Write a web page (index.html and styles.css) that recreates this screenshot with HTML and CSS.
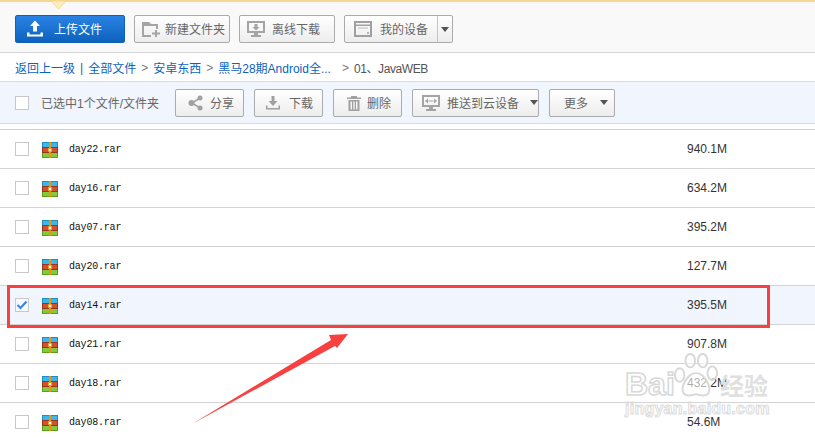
FILE: index.html
```html
<!DOCTYPE html>
<html lang="zh-CN">
<head>
<meta charset="utf-8">
<title>网盘</title>
<link rel="stylesheet" href="styles.css">
</head>
<body>
<div class="page">
  <svg class="notch" width="15" height="9" viewBox="0 0 15 9"><path d="M0 0H15L7.5 8Z" fill="#fcecc4" stroke="#f5d88f"/></svg>
  <header class="toolbar">
    <button class="btn primary">
      <svg class="ic" width="18" height="18" viewBox="0 0 18 18"><path d="M9 1L14 6.500H11V12H7V6.500H4ZM1 13H3.500V15H14.500V13H17V17H1Z" fill="#fff" transform="translate(0 -.5)"/></svg>
      <span class="tb-text">上传文件</span>
    </button>
    <button class="btn w96 folder">
      <svg class="ic" width="20" height="18" viewBox="0 0 20 18"><path d="M1 2H8L10 4H17V9H15V6H3V15H10V17H1Z" fill="#a4a4a4"/><path d="M14 10H16V12.500H19V14.500H16V17H14V14.500H11V12.500H14Z" fill="#a4a4a4"/></svg>
      <span class="tb-text">新建文件夹</span>
    </button>
    <button class="btn w96 offline">
      <svg class="ic" width="20" height="18" viewBox="0 0 20 18"><path d="M1 1H19V13H1ZM3 3V11H17V3Z" fill="#a4a4a4" fill-rule="evenodd"/><path d="M8.500 4H11.500V7H13.500L10 10.500L6.500 7H8.500ZM8 13H12V15H15V17H5V15H8Z" fill="#a4a4a4"/></svg>
      <span class="tb-text">离线下载</span>
    </button>
    <div class="btn split">
      <span class="split-main">
        <svg class="ic" width="18" height="18" viewBox="0 0 18 18"><path d="M0 1H18V17H0ZM2 6V15H16V6ZM2 3V4.500H16V3Z" fill="#a0a0a0" fill-rule="evenodd"/><path d="M4 7.500H14V8.500H4Z" fill="#bbb"/><circle cx="14" cy="13" r="1" fill="#a0a0a0"/></svg>
        <span class="tb-text">我的设备</span>
      </span>
      <span class="split-arrow"><i class="caret"></i></span>
    </div>
  </header>

  <nav class="crumbs">
    <a>返回上一级</a><span class="bar">|</span><a>全部文件</a><span class="sep">&gt;</span><a>安卓东西</a><span class="sep">&gt;</span><a class="trunc">黑马28期Android全...</a><span class="sep last">&gt;</span><span class="cur">01、JavaWEB</span>
  </nav>

  <section class="selbar">
    <span class="box"></span>
    <span class="seltext">已选中1个文件/文件夹</span>
    <div class="actions">
      <button class="btn act w69 share">
        <svg class="ic" width="16" height="16" viewBox="0 0 16 16"><path d="M12 3L4 8L12 13" fill="none" stroke="#a0a0a0" stroke-width="1.500"/><circle cx="12" cy="3" r="2.500" fill="#a0a0a0"/><circle cx="3.500" cy="8" r="3" fill="#a0a0a0"/><circle cx="12" cy="13" r="2.500" fill="#a0a0a0"/></svg>
        <span>分享</span>
      </button>
      <button class="btn act w69 down">
        <svg class="ic" width="16" height="16" viewBox="0 0 16 16"><path d="M6.500 1H9.500V6H12.500L8 11L3.500 6H6.500ZM1 10.500H2.500V13H13.500V10.500H15V14.500H1Z" fill="#a0a0a0"/></svg>
        <span>下载</span>
      </button>
      <button class="btn act w69 del">
        <svg class="ic" width="16" height="16" viewBox="0 0 16 16"><path d="M5 1H11V2.500H15V4H1V2.500H5ZM2.500 5H13.500V16H2.500ZM4.500 6.500V14.500H6V6.500ZM7.300 6.500V14.500H8.700V6.500ZM10 6.500V14.500H11.500V6.500Z" fill="#a0a0a0" fill-rule="evenodd"/></svg>
        <span>删除</span>
      </button>
      <button class="btn act w127 push">
        <svg class="ic" width="20" height="18" viewBox="0 0 20 18"><path d="M1 1H19V13H1ZM3 3V11H17V3Z" fill="#a4a4a4" fill-rule="evenodd"/><path d="M4 7L7 4.500V9.500ZM16 7L13 4.500V9.500ZM7.500 6.400H12.500V7.600H7.500ZM8 13H12V15H15V17H5V15H8Z" fill="#a4a4a4"/></svg>
        <span>推送到云设备</span><i class="caret"></i>
      </button>
      <button class="btn act w66 more">
        <span>更多</span><i class="caret"></i>
      </button>
    </div>
  </section>

  <main class="list">
    <div class="row"><span class="box"></span><svg class="rar" width="16" height="16" viewBox="0 0 16 16"><use href="#rar"/></svg><span class="name">day22.rar</span><span class="size">940.1M</span></div>
    <div class="row"><span class="box"></span><svg class="rar" width="16" height="16" viewBox="0 0 16 16"><use href="#rar"/></svg><span class="name">day16.rar</span><span class="size">634.2M</span></div>
    <div class="row"><span class="box"></span><svg class="rar" width="16" height="16" viewBox="0 0 16 16"><use href="#rar"/></svg><span class="name">day07.rar</span><span class="size">395.2M</span></div>
    <div class="row"><span class="box"></span><svg class="rar" width="16" height="16" viewBox="0 0 16 16"><use href="#rar"/></svg><span class="name">day20.rar</span><span class="size">127.7M</span></div>
    <div class="row selected"><span class="box checked"><svg width="12" height="12" viewBox="0 0 12 12"><path d="M1.500 6L4.500 9L10.500 2.500" fill="none" stroke="#3b86e0" stroke-width="2.200"/></svg></span><svg class="rar" width="16" height="16" viewBox="0 0 16 16"><use href="#rar"/></svg><span class="name">day14.rar</span><span class="size">395.5M</span></div>
    <div class="row"><span class="box"></span><svg class="rar" width="16" height="16" viewBox="0 0 16 16"><use href="#rar"/></svg><span class="name">day21.rar</span><span class="size">907.8M</span></div>
    <div class="row"><span class="box"></span><svg class="rar" width="16" height="16" viewBox="0 0 16 16"><use href="#rar"/></svg><span class="name">day18.rar</span><span class="size">432.2M</span></div>
    <div class="row"><span class="box"></span><svg class="rar" width="16" height="16" viewBox="0 0 16 16"><use href="#rar"/></svg><span class="name">day08.rar</span><span class="size">54.6M</span></div>
  </main>

  <svg class="defs" width="0" height="0">
    <symbol id="rar" viewBox="0 0 16 16">
      <rect width="16" height="16" fill="#1e8fc4"/>
      <rect x="1" y="1" width="14" height="4" fill="#3fb6e8"/>
      <rect y="5" width="16" height="6" fill="#9c3518"/>
      <rect x="1" y="6" width="14" height="4" fill="#d2502e"/>
      <rect y="11" width="16" height="5" fill="#5a9e1e"/>
      <rect x="1" y="11" width="14" height="4" fill="#84c83c"/>
      <rect x="7" width="2" height="16" fill="#e8960e"/>
      <rect x="6" y="6" width="4" height="4" fill="#f0a020"/>
      <rect x="7" y="7" width="2" height="2" fill="#fff"/>
    </symbol>
  </svg>

  <div class="redbox"></div>
  <svg class="arrow" width="170" height="100" viewBox="0 0 170 100"><path d="M2 92L141 8L139 3L158 2L147 16L145 14Z" fill="#f94040"/></svg>

  <div class="mark">
    <div class="mark-top">
      <span class="mark-bai">Bai</span>
      <svg class="paw" width="46" height="46" viewBox="0 0 46 48"><g fill="#fff" fill-opacity=".6" stroke="#d8d8d8" stroke-width="2"><ellipse cx="6" cy="24" rx="5" ry="7"/><ellipse cx="17" cy="9" rx="5" ry="7"/><ellipse cx="30" cy="9" rx="5" ry="7"/><ellipse cx="40" cy="22" rx="5" ry="7"/><path d="M23 22C15 22 9 33 9 39C9 47 18 46 23 44C28 46 37 47 37 39C37 33 31 22 23 22Z"/></g></svg>
      <span class="mark-cn">经验</span>
    </div>
    <div class="mark-url">jingyan.baidu.com</div>
  </div>
</div>
</body>
</html>
```

FILE: styles.css
```css
* { box-sizing: border-box; }
html, body { margin: 0; height: 100%; overflow: hidden; background: #fff; }
body { font: 12px "Liberation Sans", "Noto Sans CJK SC", sans-serif; color: #666; }
.page { position: relative; width: 815px; height: 439px; overflow: hidden; }
.defs { position: absolute; }

.notch { position: absolute; left: 51px; top: 1px; }
.toolbar {
  height: 53px; padding: 13px 15px 0;
  display: flex; gap: 9px; align-items: flex-start;
  background: #f9f9f9;
  border-top: 2px solid #f5d88f;
  border-bottom: 1px solid #d5d5d5;
}

.btn {
  height: 28px; padding: 0;
  display: flex; align-items: center; justify-content: flex-start;
  border: 1px solid #ababab; border-radius: 2px;
  background: linear-gradient(#fff, #ededed);
  font: inherit; color: #666; font-size: 12px;
}
.tb-text { padding-bottom: 2px; }
.btn.primary {
  width: 110px; gap: 10px; padding-left: 10px;
  border-color: #0f62b8; color: #fff;
  background: linear-gradient(#2a82e4, #0c62bc);
}
.w96 { width: 96px; }
.w69 { width: 69px; }
.w127 { width: 127px; }
.w66 { width: 66px; }
.ic { flex: none; }
.folder { padding-left: 6px; gap: 4px; }
.offline { padding-left: 6px; gap: 6px; }

.share { padding-left: 12px; gap: 6px; }
.down { padding-left: 10px; gap: 8px; }
.del { padding-left: 12px; gap: 5px; }
.push { padding-left: 8px; gap: 6px; }
.more { padding-left: 14px; }

.split { width: 109px; }
.split-main { width: 92px; padding-left: 9px; display: flex; align-items: center; gap: 8px; }
.split-arrow { flex: 1; height: 100%; border-left: 1px solid #c4c4c4; display: flex; align-items: center; justify-content: center; }
.caret { flex: none; width: 0; height: 0; border-style: solid; border-width: 5px 4.500px 0; border-color: #555 transparent transparent; }
.push .caret { margin-left: 5px; }
.more .caret { margin-left: 12px; }

.crumbs { height: 28px; padding: 1px 0 0 15px; display: flex; align-items: center; color: #0b63bd; }
.crumbs a { color: #0b63bd; }
.bar { margin: 0 5px; }
.sep { margin: 0 5px; color: #777; }
.sep.last { margin: 0 5px 0 11px; }
.cur { color: #555; letter-spacing: -.4px; }

.selbar {
  height: 43px; padding-left: 15px;
  display: flex; align-items: center;
  background: #f1f5fe;
  border-top: 1px solid #d7dbe2;
  border-bottom: 1px solid #d7dbe2;
}
.seltext { margin-left: 12px; width: 134px; color: #666; }
.actions { display: flex; gap: 10px; }

.box { flex: none; width: 14px; height: 14px; border: 1px solid #c8c8c8; background: #fff; display: flex; align-items: center; justify-content: center; }
.box.checked { background: #f6f9ff; }

.list { margin-top: 5px; border-top: 1px solid #d3d3d3; }
.row { height: 39px; padding-left: 15px; display: flex; align-items: center; border-bottom: 1px solid #d3d3d3; }
.row.selected { background: #f1f5fe; }
.rar { flex: none; margin: 2px 0 0 13px; }
.name { margin-left: 11px; width: 618px; font: 10px "Liberation Mono", monospace; letter-spacing: -.2px; color: #111; }
.size { color: #333; }

.redbox { position: absolute; left: 7px; top: 285px; width: 763px; height: 43px; border: 3px solid #f94040; }
.arrow { position: absolute; left: 190px; top: 332px; }

.mark { position: absolute; left: 625px; top: 352px; width: 190px; color: #dcdcdc; pointer-events: none; }
.mark-top { display: flex; align-items: flex-end; height: 48px; position: relative; }
.mark-bai { font: 700 32px/32px "Liberation Sans", sans-serif; color: transparent; -webkit-text-stroke: 1.500px #d8d8d8; }
.paw { position: absolute; left: 48px; top: 0; }
.mark-cn { position: absolute; left: 95px; top: 20px; font: 700 24px/26px "Noto Sans CJK SC", sans-serif; color: #e0e0e0; }
.mark-url { font: 700 16px/18px "Liberation Sans", sans-serif; letter-spacing: .25px; color: transparent; -webkit-text-stroke: 1px #dcdcdc; }
```
